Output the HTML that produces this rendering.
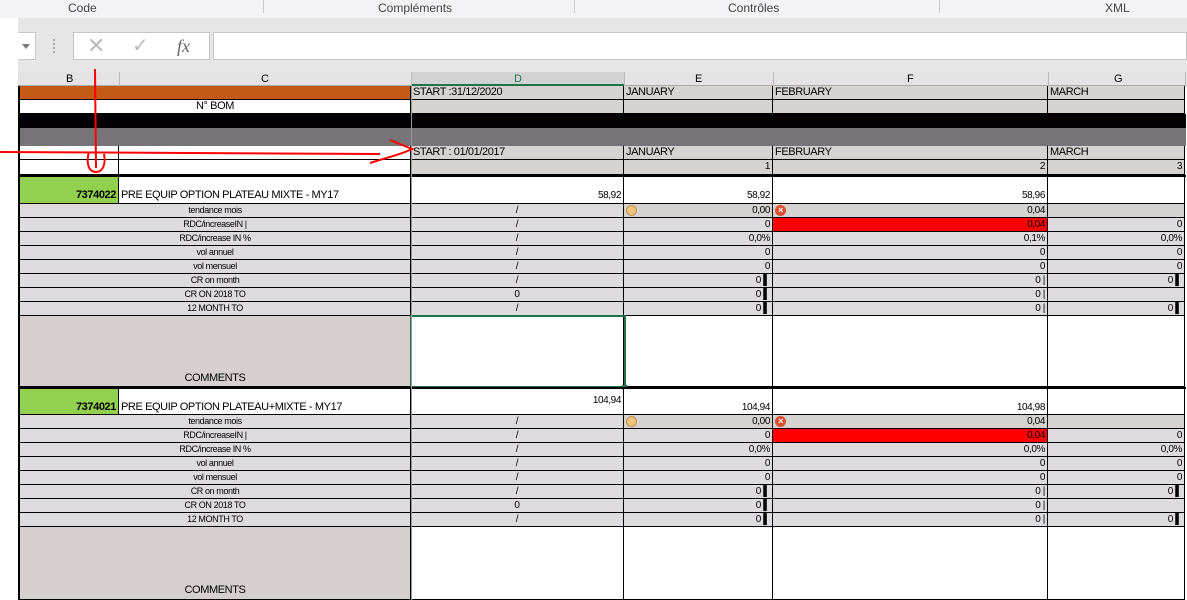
<!DOCTYPE html>
<html><head><meta charset="utf-8"><style>
*{box-sizing:border-box;margin:0;padding:0}
body{width:1187px;height:600px;overflow:hidden;background:#fff;font-family:"Liberation Sans",sans-serif;position:relative}
.a{position:absolute}
.r{position:absolute;left:20px;display:flex;font-size:10px;letter-spacing:-0.4px;color:#000}
.r>div{border-right:1px solid #000;border-bottom:1px solid #000;height:100%;overflow:hidden;white-space:nowrap;line-height:13px;position:relative}
.B{width:99px}.C{width:292px}.BC{width:391px;text-align:center}.D{width:213px}.E{width:149px}.F{width:275px}.G{width:137px}
.g{background:#dddbde}.t{background:#d6d2d0}.w{background:#fff}
.rt{text-align:right;padding-right:2px}.ct{text-align:center}
.red{background:#ff0000!important}
.dot{position:absolute;left:2px;top:1px;width:11px;height:11px;border-radius:50%;background:#f0c27a;border:1px solid #c09050}
.x{position:absolute;left:2px;top:1px;width:11px;height:11px;border-radius:50%;background:#d9502f;color:#fff;font-size:9px;line-height:11px;text-align:center;font-weight:bold}
</style></head><body>
<!-- ribbon -->
<div class="a" style="left:0;top:0;width:1187px;height:18px;background:#f3f2f5;font-size:12px;color:#444"></div>
<div class="a" style="left:68px;top:1px;font-size:12px;color:#444">Code</div>
<div class="a" style="left:378px;top:1px;font-size:12px;color:#444">Compléments</div>
<div class="a" style="left:728px;top:1px;font-size:12px;color:#444">Contrôles</div>
<div class="a" style="left:1105px;top:1px;font-size:12px;color:#444">XML</div>
<div class="a" style="left:263px;top:0;width:1px;height:13px;background:#ccc"></div>
<div class="a" style="left:574px;top:0;width:1px;height:13px;background:#ccc"></div>
<div class="a" style="left:939px;top:0;width:1px;height:13px;background:#ccc"></div>
<div class="a" style="left:18px;top:18px;width:1169px;height:54px;background:#e6e6e6"></div>
<div class="a" style="left:0;top:18px;width:18px;height:582px;background:#fff"></div>
<div class="a" style="left:18px;top:32px;width:18px;height:28px;background:#fff;border:1px solid #c6c6c6;border-left:none"></div>
<div class="a" style="left:22px;top:44px;border:4px solid transparent;border-top:5px solid #777"></div>
<div class="a" style="left:53px;top:39px;width:2px;height:14px;border-left:2px dotted #aaa"></div>
<div class="a" style="left:73px;top:32px;width:137px;height:28px;background:#fff;border:1px solid #c6c6c6"></div>
<div class="a" style="left:87px;top:33px;font-size:22px;color:#bbb;line-height:26px">✕</div>
<div class="a" style="left:132px;top:33px;font-size:20px;color:#bbb;line-height:26px">✓</div>
<div class="a" style="left:177px;top:33px;font-size:18px;color:#666;font-family:'Liberation Serif',serif;font-style:italic;line-height:26px">fx</div>
<div class="a" style="left:213px;top:32px;width:974px;height:28px;background:#fff;border:1px solid #c6c6c6"></div>
<!-- col headers -->
<div class="a" style="left:18px;top:72px;width:1169px;height:14px;background:#e3e3e3;border-bottom:1px solid #ababab;font-size:11px"></div>
<div class="a" style="left:411px;top:72px;width:213px;height:14px;background:#d2d2d2;border-bottom:2px solid #217346"></div>
<div class="a" style="left:119px;top:72px;width:1px;height:14px;background:#bbb"></div>
<div class="a" style="left:411px;top:72px;width:1px;height:14px;background:#bbb"></div>
<div class="a" style="left:624px;top:72px;width:1px;height:14px;background:#bbb"></div>
<div class="a" style="left:773px;top:72px;width:1px;height:14px;background:#bbb"></div>
<div class="a" style="left:1048px;top:72px;width:1px;height:14px;background:#bbb"></div>
<div class="a" style="left:1185px;top:72px;width:1px;height:14px;background:#bbb"></div>
<div class="a" style="left:66px;top:73px;font-size:11px">B</div>
<div class="a" style="left:261px;top:73px;font-size:11px">C</div>
<div class="a" style="left:514px;top:73px;font-size:11px;color:#217346">D</div>
<div class="a" style="left:695px;top:73px;font-size:11px">E</div>
<div class="a" style="left:907px;top:73px;font-size:11px">F</div>
<div class="a" style="left:1114px;top:73px;font-size:11px">G</div>
<!-- header rows -->
<div class="r" style="top:86px;height:14px"><div class="BC" style="background:#c55a16"></div><div class="D t" style="padding-left:2px;font-size:11px">START :31/12/2020</div><div class="E t" style="padding-left:2px;font-size:11px">JANUARY</div><div class="F t" style="padding-left:2px;font-size:11px">FEBRUARY</div><div class="G t" style="padding-left:2px;font-size:11px">MARCH</div></div>
<div class="r" style="top:100px;height:14px"><div class="BC w" style="font-size:11px">N° BOM</div><div class="D t"></div><div class="E t"></div><div class="F t"></div><div class="G t"></div></div>
<div class="a" style="left:20px;top:114px;width:1166px;height:14px;background:#040206"></div>
<div class="a" style="left:20px;top:128px;width:1166px;height:18px;background:#767476"></div>
<div class="r" style="top:146px;height:14px"><div class="B w"></div><div class="C w"></div><div class="D t" style="padding-left:2px;font-size:11px">START : 01/01/2017</div><div class="E t" style="padding-left:2px;font-size:11px">JANUARY</div><div class="F t" style="padding-left:2px;font-size:11px">FEBRUARY</div><div class="G t" style="padding-left:2px;font-size:11px">MARCH</div></div>
<div class="r" style="top:160px;height:15px"><div class="B w"></div><div class="C w"></div><div class="D t"></div><div class="E t rt">1</div><div class="F t rt">2</div><div class="G t rt">3</div></div>
<div class="a" style="left:20px;top:175px;width:1166px;height:2px;background:#000"></div>

<!-- block 1 -->
<div class="r" style="top:177px;height:27px"><div class="B rt" style="background:#92d050;font-weight:bold;padding-top:12px;font-size:11px">7374022</div><div class="C w" style="padding-top:12px;padding-left:2px;font-size:11px">PRE EQUIP OPTION PLATEAU MIXTE - MY17</div><div class="D w rt" style="padding-top:12px">58,92</div><div class="E w rt" style="padding-top:12px">58,92</div><div class="F w rt" style="padding-top:12px">58,96</div><div class="G w"></div></div>
<div class="r" style="top:204px;height:14px"><div class="BC g" style="font-size:9px">tendance mois</div><div class="D g ct">/</div><div class="E t rt"><span class="dot"></span>0,00</div><div class="F t rt"><span class="x">×</span>0,04</div><div class="G t"></div></div>
<div class="r" style="top:218px;height:14px"><div class="BC g" style="font-size:9px">RDC/increaseIN |</div><div class="D g ct">/</div><div class="E g rt">0</div><div class="F red rt">0,04</div><div class="G g rt">0</div></div>
<div class="r" style="top:232px;height:14px"><div class="BC g" style="font-size:9px">RDC/increase IN %</div><div class="D g ct">/</div><div class="E g rt">0,0%</div><div class="F g rt">0,1%</div><div class="G g rt">0,0%</div></div>
<div class="r" style="top:246px;height:14px"><div class="BC g" style="font-size:9px">vol annuel</div><div class="D g ct">/</div><div class="E g rt">0</div><div class="F g rt">0</div><div class="G g rt">0</div></div>
<div class="r" style="top:260px;height:14px"><div class="BC g" style="font-size:9px">vol mensuel</div><div class="D g ct">/</div><div class="E g rt">0</div><div class="F g rt">0</div><div class="G g rt">0</div></div>
<div class="r" style="top:274px;height:14px"><div class="BC g" style="font-size:9px">CR on month</div><div class="D g ct">/</div><div class="E g rt">0 ▌</div><div class="F g rt">0 |</div><div class="G g rt">0 ▌</div></div>
<div class="r" style="top:288px;height:14px"><div class="BC g" style="font-size:9px">CR ON 2018 TO</div><div class="D g ct">0</div><div class="E g rt">0 ▌</div><div class="F g rt">0 |</div><div class="G g"></div></div>
<div class="r" style="top:302px;height:14px"><div class="BC g" style="font-size:9px">12 MONTH TO</div><div class="D g ct">/</div><div class="E g rt">0 ▌</div><div class="F g rt">0 |</div><div class="G g rt">0 ▌</div></div>
<div class="r" style="top:316px;height:71px"><div class="BC" style="background:#d5d0ce;padding-top:56px;font-size:11px">COMMENTS</div><div class="D w"></div><div class="E w"></div><div class="F w"></div><div class="G w"></div></div>
<div class="a" style="left:410px;top:315px;width:216px;height:73px;border:2px solid #217346"></div>
<div class="a" style="left:622px;top:385px;width:5px;height:5px;background:#217346"></div>
<div class="a" style="left:20px;top:387px;width:1166px;height:2px;background:#000"></div>

<!-- block 2 -->
<div class="r" style="top:389px;height:26px"><div class="B rt" style="background:#92d050;font-weight:bold;padding-top:12px;font-size:11px">7374021</div><div class="C w" style="padding-top:12px;padding-left:2px;font-size:11px">PRE EQUIP OPTION PLATEAU+MIXTE - MY17</div><div class="D w rt" style="padding-top:5px">104,94</div><div class="E w rt" style="padding-top:12px">104,94</div><div class="F w rt" style="padding-top:12px">104,98</div><div class="G w"></div></div>
<div class="r" style="top:415px;height:14px"><div class="BC g" style="font-size:9px">tendance mois</div><div class="D g ct">/</div><div class="E t rt"><span class="dot"></span>0,00</div><div class="F t rt"><span class="x">×</span>0,04</div><div class="G t"></div></div>
<div class="r" style="top:429px;height:14px"><div class="BC g" style="font-size:9px">RDC/increaseIN |</div><div class="D g ct">/</div><div class="E g rt">0</div><div class="F red rt">0,04</div><div class="G g rt">0</div></div>
<div class="r" style="top:443px;height:14px"><div class="BC g" style="font-size:9px">RDC/increase IN %</div><div class="D g ct">/</div><div class="E g rt">0,0%</div><div class="F g rt">0,0%</div><div class="G g rt">0,0%</div></div>
<div class="r" style="top:457px;height:14px"><div class="BC g" style="font-size:9px">vol annuel</div><div class="D g ct">/</div><div class="E g rt">0</div><div class="F g rt">0</div><div class="G g rt">0</div></div>
<div class="r" style="top:471px;height:14px"><div class="BC g" style="font-size:9px">vol mensuel</div><div class="D g ct">/</div><div class="E g rt">0</div><div class="F g rt">0</div><div class="G g rt">0</div></div>
<div class="r" style="top:485px;height:14px"><div class="BC g" style="font-size:9px">CR on month</div><div class="D g ct">/</div><div class="E g rt">0 ▌</div><div class="F g rt">0 |</div><div class="G g rt">0 ▌</div></div>
<div class="r" style="top:499px;height:14px"><div class="BC g" style="font-size:9px">CR ON 2018 TO</div><div class="D g ct">0</div><div class="E g rt">0 ▌</div><div class="F g rt">0 |</div><div class="G g"></div></div>
<div class="r" style="top:513px;height:14px"><div class="BC g" style="font-size:9px">12 MONTH TO</div><div class="D g ct">/</div><div class="E g rt">0 ▌</div><div class="F g rt">0 |</div><div class="G g rt">0 ▌</div></div>
<div class="r" style="top:527px;height:73px"><div class="BC" style="background:#d5d0ce;padding-top:57px;font-size:11px">COMMENTS</div><div class="D w"></div><div class="E w"></div><div class="F w"></div><div class="G w"></div></div>
<div class="a" style="left:411px;top:86px;width:1px;height:514px;background:#9a9a9a"></div>
<div class="a" style="left:18px;top:86px;width:2px;height:514px;background:#000"></div>

<!-- red annotations -->
<svg class="a" style="left:0;top:0" width="1187" height="600">
<g fill="none" stroke="#ff0000" stroke-width="2">
<path d="M95 69 L96 168"/>
<path d="M89 152 C86 162 88 172 96 172 C103 172 106 164 104 154"/>
<path d="M0 152 L380 154"/>
<path d="M390 140 L412 149 C400 155 385 158 370 163"/>
</g>
</svg>
</body></html>
